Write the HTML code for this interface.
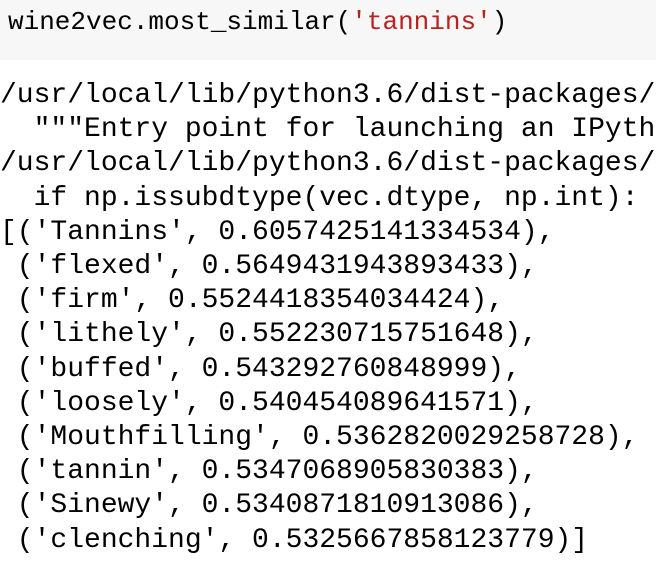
<!DOCTYPE html>
<html><head><style>
html,body{margin:0;padding:0;background:#fff;width:656px;height:568px;overflow:hidden}
.cell{position:absolute;left:0;top:0;width:656px;height:60px;background:#f7f7f7}
pre{margin:0;font-family:"Liberation Mono",monospace;color:#000;white-space:pre;position:absolute}
.in{left:8px;top:7px;font-size:26px;line-height:30px}
.s{color:#ba2121}
.out{left:0;top:79px;font-size:28px;line-height:34.2px}
</style></head><body>
<div class="cell"></div>
<pre class="in">wine2vec.most_similar(<span class="s">'tannins'</span>)</pre>
<pre class="out">/usr/local/lib/python3.6/dist-packages/
  """Entry point for launching an IPyth
/usr/local/lib/python3.6/dist-packages/
  if np.issubdtype(vec.dtype, np.int):
[('Tannins', 0.6057425141334534),
 ('flexed', 0.5649431943893433),
 ('firm', 0.5524418354034424),
 ('lithely', 0.552230715751648),
 ('buffed', 0.543292760848999),
 ('loosely', 0.540454089641571),
 ('Mouthfilling', 0.5362820029258728),
 ('tannin', 0.5347068905830383),
 ('Sinewy', 0.5340871810913086),
 ('clenching', 0.5325667858123779)]</pre>
</body></html>
